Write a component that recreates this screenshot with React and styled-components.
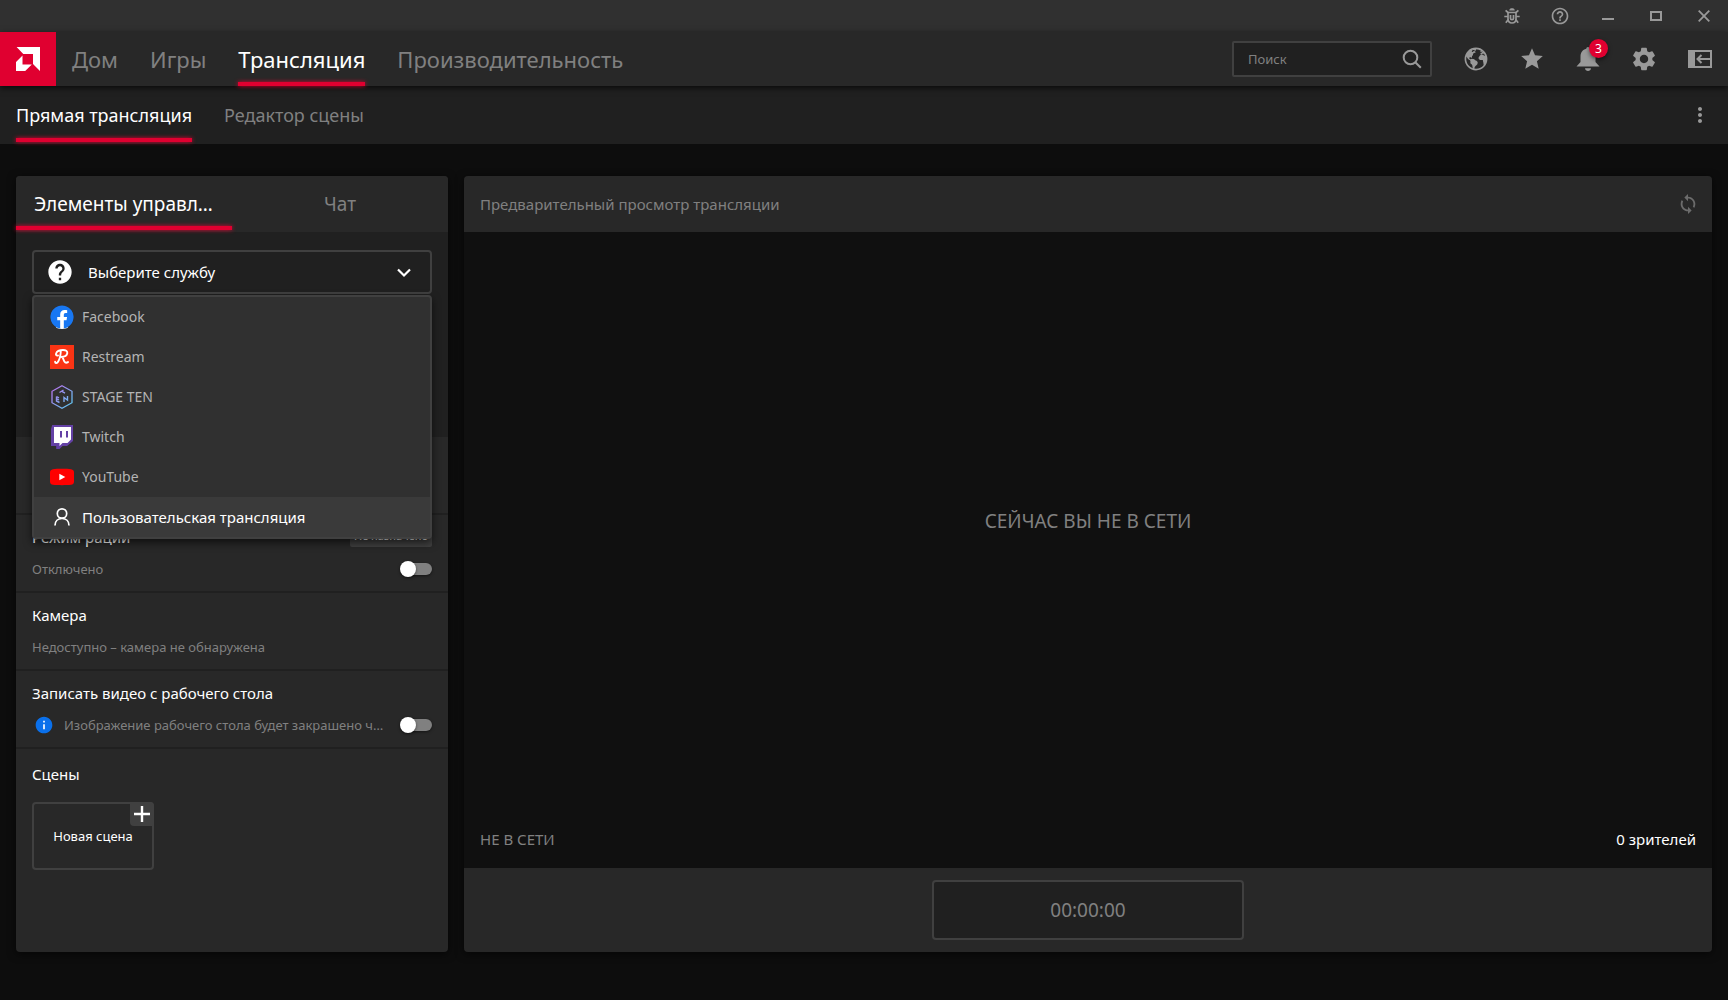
import React from "react";
import styled, { createGlobalStyle, css } from "styled-components";
import { FaFacebook } from "react-icons/fa";
import { MdStar, MdSettings, MdMoreVert, MdSync, MdHelpOutline, MdHelp, MdInfo } from "react-icons/md";
import { IoEarth } from "react-icons/io5";

const color = {
  accent: "#e00030",
  page: "#0d0d0d",
  preview: "#101010",
  base: "#202020",
  panel: "#282828",
  raised: "#303030",
  active: "#3a3a3a",
  line: "#404040",
  icon: "#999999",
  muted: "#808080",
  soft: "#b4b4b4",
  text: "#ffffff",
};

const GlobalStyle = createGlobalStyle`
  *, *::before, *::after { box-sizing: border-box; }
  body {
    margin: 0;
    background: ${color.page};
    color: ${color.text};
    font-family: "Noto Sans", "Open Sans", sans-serif;
    font-size: 15px;
    line-height: 24px;
  }
  button, input { font: inherit; color: inherit; }
  button { padding: 0; border: 0; background: none; cursor: pointer; }
  h2, p, ul { margin: 0; padding: 0; font-weight: 400; }
  a { color: inherit; text-decoration: none; }
  svg { flex: none; }
`;

const Page = styled.div`
  display: flex;
  flex-direction: column;
  min-height: 100vh;
`;

const TitleBar = styled.div`
  display: flex;
  justify-content: flex-end;
  gap: 24px;
  height: 32px;
  padding: 0 12px;
  background: ${color.raised};
`;

const WindowButton = styled.button`
  display: flex;
  align-items: center;
  justify-content: center;
  width: 24px;
  color: ${color.icon};
`;

const NavBar = styled.header`
  position: relative;
  z-index: 2;
  display: flex;
  align-items: stretch;
  height: 54px;
  padding-right: 16px;
  background: ${color.panel};
  box-shadow: 0 2px 6px rgba(0, 0, 0, 0.7);
`;

const Logo = styled.a`
  display: grid;
  place-items: center;
  width: 56px;
  background: ${color.accent};
`;

const NavLinks = styled.nav`
  display: flex;
  gap: 32px;
  padding: 0 16px;
  font-size: ${(p) => (p.$sub ? "18px" : "22px")};
`;

const glow = css`
  &::after {
    content: "";
    position: absolute;
    left: 0;
    right: 0;
    bottom: ${(p) => (p.$raised ? "2px" : "0")};
    height: 4px;
    background: ${color.accent};
    box-shadow: 0 0 4px ${color.accent};
  }
`;

const NavLink = styled.a`
  position: relative;
  display: flex;
  align-items: center;
  color: ${(p) => (p.$active ? color.text : color.muted)};
  ${(p) => p.$active && glow}
`;

const Tools = styled.div`
  display: flex;
  align-items: center;
  gap: 32px;
  margin-left: auto;
`;

const SearchBox = styled.label`
  display: flex;
  align-items: center;
  width: 200px;
  height: 36px;
  padding: 0 6px 0 14px;
  border: 2px solid ${color.line};
  border-radius: 2px;
  background: ${color.base};
  color: ${color.icon};
`;

const SearchInput = styled.input`
  flex: 1;
  min-width: 0;
  padding: 0;
  border: 0;
  outline: 0;
  background: none;
  font-size: 13px;
  &::placeholder { color: ${color.muted}; opacity: 1; }
`;

const IconButton = styled.button`
  position: relative;
  display: flex;
  align-items: center;
  justify-content: center;
  width: 24px;
  height: 24px;
  color: ${(p) => (p.$dim ? "#6c6c6c" : color.icon)};
`;

const Badge = styled.span`
  position: absolute;
  top: -8px;
  right: -8px;
  width: 19px;
  height: 19px;
  border-radius: 50%;
  background: ${color.accent};
  box-shadow: 0 2px 4px rgba(0, 0, 0, 0.5);
  color: ${color.text};
  font-size: 12px;
  line-height: 19px;
  text-align: center;
`;

const SubBar = styled.div`
  display: flex;
  justify-content: space-between;
  height: 58px;
  padding-right: 16px;
  background: ${color.base};
  ${IconButton} { align-self: center; }
`;

const Main = styled.main`
  flex: 1;
  display: grid;
  grid-template-columns: 432px minmax(0, 1fr);
  gap: 16px;
  padding: 32px 16px 48px;
`;

const Card = styled.section`
  display: flex;
  flex-direction: column;
  min-width: 0;
  border-radius: 4px;
  background: ${(p) => (p.$dark ? color.preview : color.panel)};
  box-shadow: 0 2px 8px rgba(0, 0, 0, 0.6);
`;

const CardHeader = styled.div`
  display: flex;
  height: 56px;
  border-radius: 4px 4px 0 0;
  background: ${color.panel};
`;

const PreviewHeader = styled(CardHeader)`
  align-items: center;
  justify-content: space-between;
  padding: 0 12px 0 16px;
  color: ${color.muted};
`;

const Tab = styled.button`
  position: relative;
  flex: 1;
  min-width: 0;
  padding: 0 18px;
  font-size: 19px;
  color: ${(p) => (p.$active ? color.text : color.muted)};
  ${(p) => p.$active && glow}
`;

const Ellipsis = styled.span`
  display: block;
  flex: 1;
  min-width: 0;
  overflow: hidden;
  text-overflow: ellipsis;
  white-space: nowrap;
`;

const ServiceArea = styled.div`
  height: 205px;
  padding: 18px 16px;
  background: ${color.base};
`;

const Picker = styled.div`
  position: relative;
  z-index: 1;
`;

const PickerButton = styled.button`
  display: flex;
  align-items: center;
  gap: 16px;
  width: 100%;
  height: 44px;
  padding: 0 14px;
  border: 2px solid ${color.line};
  border-radius: 4px;
  text-align: left;
  svg:last-child { margin-left: auto; }
`;

const QuestionMark = styled.span`
  display: flex;
  align-items: center;
  justify-content: center;
  width: 24px;
  height: 24px;
`;

const Menu = styled.ul`
  position: absolute;
  top: calc(100% + 1px);
  left: 0;
  right: 0;
  border: 2px solid ${color.line};
  border-radius: 4px;
  background: ${color.raised};
  box-shadow: 0 4px 8px rgba(0, 0, 0, 0.6);
  list-style: none;
`;

const MenuItem = styled.li`
  display: flex;
  align-items: center;
  gap: 8px;
  height: 40px;
  padding: 0 16px;
  background: ${(p) => (p.$active ? color.active : "transparent")};
  color: ${(p) => (p.$active ? color.text : color.soft)};
  font-size: ${(p) => (p.$active ? "15px" : "14px")};
  cursor: pointer;
`;

const Setting = styled.div`
  display: flex;
  flex-direction: column;
  gap: 8px;
  min-height: 78px;
  padding: 10px 16px;
  border-bottom: 2px solid ${color.base};
`;

const Row = styled.div`
  display: flex;
  justify-content: space-between;
  align-items: ${(p) => (p.$top ? "flex-start" : "center")};
  height: 24px;
`;

const Title = styled.h2`
  font-size: 15px;
`;

const Note = styled.p`
  display: flex;
  align-items: center;
  gap: 8px;
  flex: 1;
  min-width: 0;
  padding-right: 12px;
  color: ${color.muted};
  font-size: 13px;
`;

const InfoDot = styled.span`
  display: flex;
  align-items: center;
  justify-content: center;
  width: 24px;
  height: 24px;
  color: #0a70eb;
`;

const InfoCore = styled(MdInfo)`
  border-radius: 50%;
  background: radial-gradient(#fff 50%, transparent 52%);
`;

const KeyButton = styled.button`
  height: 22px;
  padding: 0 4px;
  border-radius: 2px;
  background: ${color.line};
  color: ${color.text};
  font-size: 11px;
  line-height: 22px;
`;

const Switch = styled.input`
  appearance: none;
  position: relative;
  width: 32px;
  height: 16px;
  margin: 0;
  cursor: pointer;
  &::before {
    content: "";
    position: absolute;
    inset: 2px 0 2px 2px;
    border-radius: 6px;
    background: #808080;
    box-shadow: 0 1px 3px rgba(0, 0, 0, 0.5);
  }
  &::after {
    content: "";
    position: absolute;
    top: 0;
    left: 0;
    width: 16px;
    height: 16px;
    border-radius: 50%;
    background: ${color.text};
    box-shadow: 0 1px 3px rgba(0, 0, 0, 0.5);
  }
  &:checked::after { left: 16px; }
`;

const Scenes = styled.div`
  display: flex;
  flex-direction: column;
  align-items: flex-start;
  gap: 16px;
  padding: 13px 16px;
`;

const SceneButton = styled.button`
  position: relative;
  width: 122px;
  height: 68px;
  border: 2px solid ${color.line};
  border-radius: 4px;
  font-size: 13px;
`;

const PlusCorner = styled.span`
  position: absolute;
  top: -2px;
  right: -2px;
  display: grid;
  place-items: center;
  width: 24px;
  height: 24px;
  border-radius: 0 4px 0 4px;
  background: ${color.line};
`;

const Stage = styled.div`
  flex: 1;
  display: grid;
  place-items: center;
  color: ${color.muted};
  font-size: 19px;
`;

const StatusBar = styled.div`
  display: flex;
  align-items: center;
  justify-content: space-between;
  height: 58px;
  padding: 0 16px;
  color: ${color.muted};
`;

const Viewers = styled.span`
  color: ${color.text};
`;

const CardFooter = styled.div`
  display: flex;
  justify-content: center;
  padding: 12px 0;
  border-radius: 0 0 4px 4px;
  background: ${color.panel};
`;

const TimerButton = styled.button`
  width: 25%;
  height: 60px;
  border: 2px solid ${color.line};
  border-radius: 4px;
  background: ${color.base};
  color: ${color.muted};
  font-size: 19px;
`;

const LogoMark = () => (
  <svg width="24" height="24" viewBox="0 0 24 24" fill="#fff" aria-hidden="true">
    <path d="M.6 0H24v24l-7-7V7H7.300z" />
    <path d="M6.500 8.500 0 15v9h9.200l6.600-6.500H6.500z" />
  </svg>
);

const BugIcon = () => (
  <svg width="16" height="16" viewBox="0 0 16 16" fill="none" stroke="currentColor" strokeWidth="1.700" aria-hidden="true">
    <path d="M5.200 2.500C5.200.8 6.600.2 8 .2s2.800.6 2.800 2.300z" fill="currentColor" stroke="none" />
    <path d="M4 4.500h8v6.200C12 13.400 10.300 15 8 15s-4-1.600-4-4.300z" />
    <path d="M6.500 7v3.500c0 1.600 3 1.600 3 0V7M4 4.500 1.600 2.300M12 4.500l2.400-2.200M4 8.500H.3M12 8.500h3.700M4.300 11.500l-2.500 3.300M11.700 11.500l2.500 3.300" />
  </svg>
);

const MinimizeIcon = () => (
  <svg width="12" height="12" viewBox="0 0 12 12" aria-hidden="true">
    <path d="M0 9h12" stroke="currentColor" strokeWidth="2" />
  </svg>
);

const MaximizeIcon = () => (
  <svg width="12" height="10" viewBox="0 0 12 10" aria-hidden="true">
    <path d="M1 1h10v8H1z" fill="none" stroke="currentColor" strokeWidth="2" />
  </svg>
);

const CloseIcon = () => (
  <svg width="12" height="12" viewBox="0 0 12 12" aria-hidden="true">
    <path d="m.7.700 10.600 10.600M11.300.700.7 11.300" stroke="currentColor" strokeWidth="1.800" />
  </svg>
);

const SearchIcon = () => (
  <svg width="24" height="24" viewBox="0 0 24 24" fill="none" stroke="currentColor" strokeWidth="2" aria-hidden="true">
    <circle cx="10.500" cy="10.500" r="6.800" />
    <path d="m15.300 15.300 5.500 5.500" />
  </svg>
);

const BellIcon = () => (
  <svg width="24" height="24" viewBox="0 0 24 24" fill="currentColor" aria-hidden="true">
    <path d="M12 0c1 0 1.600.7 1.700 1.800C17.400 2.600 19.500 5.500 19.500 9.500v5.500l4 4.500H.5l4-4.500V9.500c0-4 2.100-6.900 5.800-7.700C10.400.7 11 0 12 0z" />
    <path d="M9 21.300h6c-.2 1.700-1.400 2.700-3 2.700s-2.800-1-3-2.700z" />
  </svg>
);

const PanelIcon = () => (
  <svg width="24" height="18" viewBox="0 0 24 18" fill="none" stroke="currentColor" strokeWidth="2" aria-hidden="true">
    <path d="M1 1h22v16H1z" />
    <path d="M0 0h7v18H0z" fill="currentColor" stroke="none" />
    <path d="M9.500 9H23M13.500 5l-4 4 4 4" />
  </svg>
);

const ChevronIcon = () => (
  <svg width="24" height="24" viewBox="0 0 24 24" fill="none" stroke="#fff" strokeWidth="2.200" aria-hidden="true">
    <path d="m6 9.500 6 6 6-6" />
  </svg>
);

const PlusIcon = () => (
  <svg width="16" height="16" viewBox="0 0 16 16" stroke="#fff" strokeWidth="2.400" aria-hidden="true">
    <path d="M8 0v16M0 8h16" />
  </svg>
);

const RestreamIcon = () => (
  <svg width="24" height="24" viewBox="0 0 24 24" aria-hidden="true">
    <path d="M0 0h24v24H0z" fill="#f93414" />
    <path
      d="M10.800 6.500c-.3 4.500-1.300 8.500-3.200 10.800-1 1.200-2.500.8-2.500-.6M8 10.500c-1.600.4-2.400-.6-1.900-2C7 6 10 5 13 5c2.800 0 4.600 1 4.300 3.200-.3 2.300-3 3.700-6.300 3.700 2 .2 2.200 1.500 2.700 3.200.6 2.200 2 3.400 4.300 2"
      fill="none"
      stroke="#fff"
      strokeWidth="1.900"
      strokeLinecap="round"
      strokeLinejoin="round"
    />
  </svg>
);

const StageTenIcon = () => (
  <svg width="24" height="24" viewBox="0 0 24 24" fill="none" stroke="url(#stage)" aria-hidden="true">
    <defs>
      <linearGradient id="stage" x1="0" y1="0" x2="24" y2="24" gradientUnits="userSpaceOnUse">
        <stop offset="0.200" stopColor="#b07cf0" />
        <stop offset="0.900" stopColor="#5cc8f0" />
      </linearGradient>
    </defs>
    <path d="M12 .8 22 6.300v11.400L12 23.200 2 17.700V6.300z" strokeWidth="1.300" />
    <path d="M9.500 7.500 13.500 5M11.500 6.200l3.500 2M6.500 11.500v4.500l3 1.500M6.500 11.500l2.500 1.300M6.500 13.700l2.500 1.300M14 17v-4.500l3.500 2.700V11" strokeWidth="1.400" />
  </svg>
);

const TwitchIcon = () => (
  <svg width="24" height="24" viewBox="0 0 24 24" aria-hidden="true">
    <path d="M2.200 0H23v16l-6 5h-4.500L9.500 24H6.200v-3H1V4z" fill="#6441a5" />
    <path d="M4 2h17v12.500L17.500 18h-5l-3 3v-3H4z" fill="#fff" />
    <path d="M10 6h2v6.500h-2zM16 6h2v6.500h-2z" fill="#6441a5" />
  </svg>
);

const YouTubeIcon = () => (
  <svg width="24" height="24" viewBox="0 0 24 24" aria-hidden="true">
    <path d="M3 4.200c4-.5 14-.5 18 0 2 .3 3 1.500 3 3.300v9c0 1.800-1 3-3 3.300-4 .5-14 .5-18 0-2-.3-3-1.500-3-3.300v-9c0-1.800 1-3 3-3.300z" fill="#f00" />
    <path d="m9.300 8.800 6 3.200-6 3.200z" fill="#fff" />
  </svg>
);

const PersonIcon = () => (
  <svg width="24" height="24" viewBox="0 0 24 24" fill="none" stroke="#fff" strokeWidth="1.700" aria-hidden="true">
    <circle cx="12" cy="8.500" r="4.700" />
    <path d="M5 20.500c0-4.300 3-7 7-7s7 2.700 7 7" />
  </svg>
);

const FacebookIcon = styled(FaFacebook)`
  border-radius: 50%;
  background: linear-gradient(#fff, #fff) center bottom / 12px 20px no-repeat;
  color: #1877f2;
`;

const services = [
  { name: "Facebook", icon: <FacebookIcon size={24} /> },
  { name: "Restream", icon: <RestreamIcon /> },
  { name: "STAGE TEN", icon: <StageTenIcon /> },
  { name: "Twitch", icon: <TwitchIcon /> },
  { name: "YouTube", icon: <YouTubeIcon /> },
  { name: "Пользовательская трансляция", icon: <PersonIcon />, active: true },
];

export default function App() {
  return (
    <Page>
      <GlobalStyle />
      <TitleBar>
        <WindowButton aria-label="Сообщить об ошибке"><BugIcon /></WindowButton>
        <WindowButton aria-label="Справка"><MdHelpOutline size={20} /></WindowButton>
        <WindowButton aria-label="Свернуть"><MinimizeIcon /></WindowButton>
        <WindowButton aria-label="Развернуть"><MaximizeIcon /></WindowButton>
        <WindowButton aria-label="Закрыть"><CloseIcon /></WindowButton>
      </TitleBar>

      <NavBar>
        <Logo href="#" aria-label="AMD"><LogoMark /></Logo>
        <NavLinks>
          <NavLink href="#home">Дом</NavLink>
          <NavLink href="#games">Игры</NavLink>
          <NavLink href="#stream" $active>Трансляция</NavLink>
          <NavLink href="#performance">Производительность</NavLink>
        </NavLinks>
        <Tools>
          <SearchBox>
            <SearchInput type="text" placeholder="Поиск" aria-label="Поиск" />
            <SearchIcon />
          </SearchBox>
          <IconButton aria-label="Браузер"><IoEarth size={26} /></IconButton>
          <IconButton aria-label="Избранное"><MdStar size={26} /></IconButton>
          <IconButton aria-label="Уведомления">
            <BellIcon />
            <Badge>3</Badge>
          </IconButton>
          <IconButton aria-label="Настройки"><MdSettings size={28} /></IconButton>
          <IconButton aria-label="Боковая панель"><PanelIcon /></IconButton>
        </Tools>
      </NavBar>

      <SubBar>
        <NavLinks $sub>
          <NavLink href="#live" $active $raised>Прямая трансляция</NavLink>
          <NavLink href="#editor">Редактор сцены</NavLink>
        </NavLinks>
        <IconButton aria-label="Ещё"><MdMoreVert size={24} /></IconButton>
      </SubBar>

      <Main>
        <Card>
          <CardHeader>
            <Tab $active $raised><Ellipsis>Элементы управления</Ellipsis></Tab>
            <Tab>Чат</Tab>
          </CardHeader>
          <ServiceArea>
            <Picker>
              <PickerButton aria-haspopup="listbox" aria-expanded="true">
                <QuestionMark><MdHelp size={28} /></QuestionMark>
                Выберите службу
                <ChevronIcon />
              </PickerButton>
              <Menu role="listbox">
                {services.map((s) => (
                  <MenuItem key={s.name} role="option" aria-selected={!!s.active} $active={s.active}>
                    {s.icon}
                    {s.name}
                  </MenuItem>
                ))}
              </Menu>
            </Picker>
          </ServiceArea>
          <Setting />
          <Setting>
            <Row $top>
              <Title>Режим рации</Title>
              <KeyButton>Не назначено</KeyButton>
            </Row>
            <Row>
              <Note>Отключено</Note>
              <Switch type="checkbox" role="switch" aria-label="Режим рации" />
            </Row>
          </Setting>
          <Setting>
            <Title>Камера</Title>
            <Note>Недоступно – камера не обнаружена</Note>
          </Setting>
          <Setting>
            <Title>Записать видео с рабочего стола</Title>
            <Row>
              <Note>
                <InfoDot><InfoCore size={20} /></InfoDot>
                <Ellipsis>Изображение рабочего стола будет закрашено черным</Ellipsis>
              </Note>
              <Switch type="checkbox" role="switch" aria-label="Записать видео с рабочего стола" />
            </Row>
          </Setting>
          <Scenes>
            <Title>Сцены</Title>
            <SceneButton>
              Новая сцена
              <PlusCorner><PlusIcon /></PlusCorner>
            </SceneButton>
          </Scenes>
        </Card>

        <Card $dark>
          <PreviewHeader>
            Предварительный просмотр трансляции
            <IconButton $dim aria-label="Обновить"><MdSync size={22} /></IconButton>
          </PreviewHeader>
          <Stage>СЕЙЧАС ВЫ НЕ В СЕТИ</Stage>
          <StatusBar>
            <span>НЕ В СЕТИ</span>
            <Viewers>0 зрителей</Viewers>
          </StatusBar>
          <CardFooter>
            <TimerButton>00:00:00</TimerButton>
          </CardFooter>
        </Card>
      </Main>
    </Page>
  );
}
